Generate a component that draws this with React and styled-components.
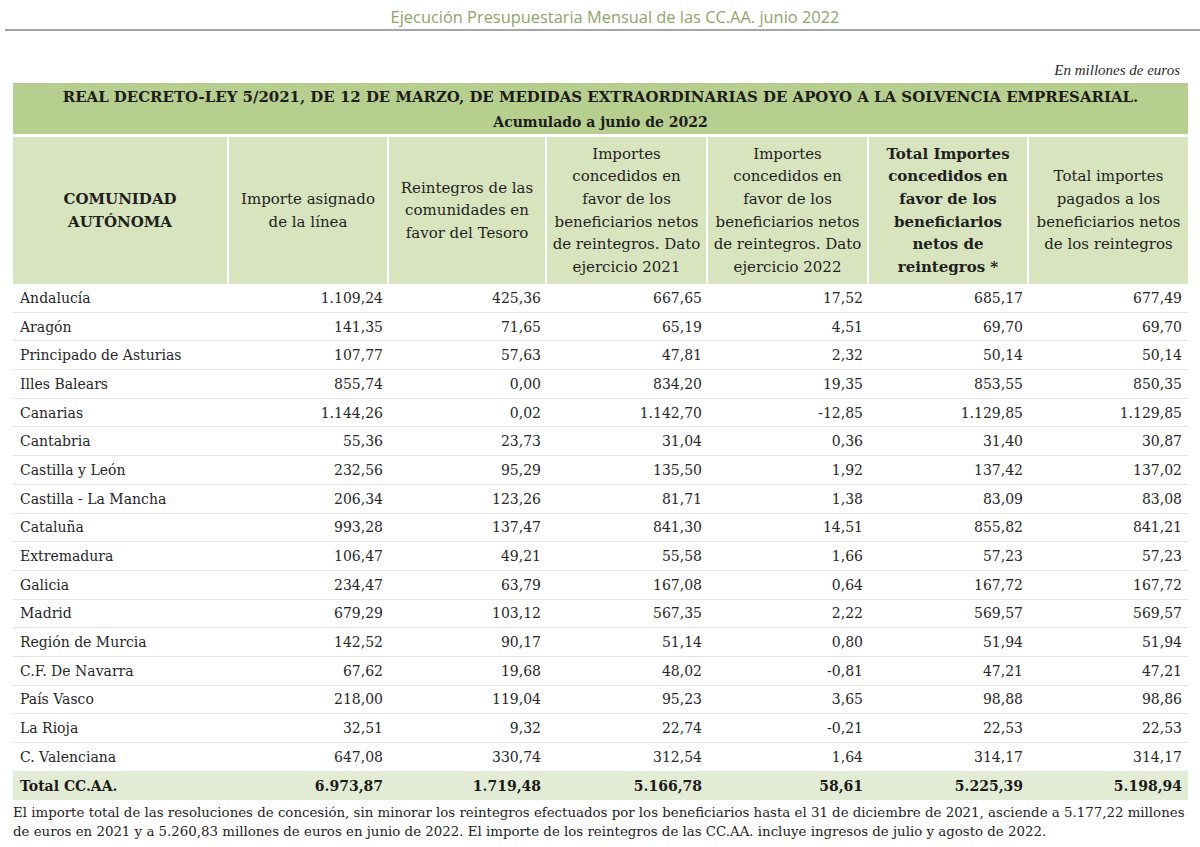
import React from "react";
import styled, { createGlobalStyle } from "styled-components";

const Global = createGlobalStyle`
  html, body { margin: 0; padding: 0; background: #ffffff; }
  body { font-family: "DejaVu Serif", "Liberation Serif", serif; color: #1f1f1f; }
`;

const Page = styled.div`
  width: 1200px;
  height: 847px;
  overflow: hidden;
  background: #fff;
`;

const Title = styled.div`
  margin-left: 5px;
  height: 29px;
  border-bottom: 2px solid #a6a6a6;
  font-family: "Open Sans", "Noto Sans", sans-serif;
  font-size: 16.4px;
  line-height: 33px;
  color: #8fa468;
  text-align: center;
  padding-left: 25px;
`;

const Unit = styled.div`
  margin-top: 29px;
  height: 21px;
  padding-right: 20px;
  text-align: right;
  font-style: italic;
  font-size: 15px;
  line-height: 21px;
  color: #2a2a2a;
  font-family: "Liberation Serif", serif;
`;

const Table = styled.div`
  margin: 2px 0 0 13px;
  width: 1175px;
`;

const Banner = styled.div`
  background: #b7cf8e;
  height: 51px;
  display: flex;
  flex-direction: column;
  justify-content: center;
  align-items: center;
  font-weight: bold;
  color: #1c1c1c;
`;

const BannerLine = styled.div`
  height: 25px;
  line-height: 27px;
  font-size: ${(p) => p.$size || "14px"};
  white-space: nowrap;
`;

const cols = "216px 160px 158px 161px 161px 160px 159px";

const HeaderRow = styled.div`
  display: grid;
  grid-template-columns: ${cols};
  margin-top: 3px;
  height: 147px;
`;

const HeadCell = styled.div`
  background: #d8e4be;
  border-right: 2px solid #fff;
  display: flex;
  align-items: center;
  justify-content: center;
  text-align: center;
  font-size: 15px;
  line-height: 22.6px;
  padding: 0 2px;
  white-space: nowrap;
  font-weight: ${(p) => (p.$bold ? "bold" : "normal")};
  &:last-child { border-right: none; }
`;

const BodyRow = styled.div`
  display: grid;
  grid-template-columns: ${cols};
  height: 28.7px;
  box-sizing: border-box;
  border-bottom: 1px solid #e3e6dc;
  align-items: center;
  font-size: 14px;
  color: #262626;
  background: ${(p) => (p.$total ? "#e2ebd4" : "transparent")};
  font-weight: ${(p) => (p.$total ? "bold" : "normal")};
  ${(p) => p.$total && "border-bottom: none; color: #1a1a1a;"}
`;

const NameCell = styled.div`
  padding-left: 7px;
  white-space: nowrap;
`;

const NumCell = styled.div`
  text-align: right;
  padding-right: 6px;
  white-space: nowrap;
`;

const Note = styled.div`
  margin: 3px 0 0 13px;
  font-size: 13.35px;
  line-height: 19px;
  color: #222;
`;

const NoteLine = styled.div`
  white-space: nowrap;
`;

const headers = [
  { t: ["COMUNIDAD", "AUTÓNOMA"], bold: true },
  { t: ["Importe asignado", "de la línea"] },
  { t: ["Reintegros de las", "comunidades en", "favor del Tesoro"] },
  { t: ["Importes", "concedidos en", "favor de los", "beneficiarios netos", "de reintegros. Dato", "ejercicio 2021"] },
  { t: ["Importes", "concedidos en", "favor de los", "beneficiarios netos", "de reintegros. Dato", "ejercicio 2022"] },
  { t: ["Total Importes", "concedidos en", "favor de los", "beneficiarios", "netos de", "reintegros *"], bold: true },
  { t: ["Total importes", "pagados a los", "beneficiarios netos", "de los reintegros"] },
];

const rows = [
  ["Andalucía", "1.109,24", "425,36", "667,65", "17,52", "685,17", "677,49"],
  ["Aragón", "141,35", "71,65", "65,19", "4,51", "69,70", "69,70"],
  ["Principado de Asturias", "107,77", "57,63", "47,81", "2,32", "50,14", "50,14"],
  ["Illes Balears", "855,74", "0,00", "834,20", "19,35", "853,55", "850,35"],
  ["Canarias", "1.144,26", "0,02", "1.142,70", "-12,85", "1.129,85", "1.129,85"],
  ["Cantabria", "55,36", "23,73", "31,04", "0,36", "31,40", "30,87"],
  ["Castilla y León", "232,56", "95,29", "135,50", "1,92", "137,42", "137,02"],
  ["Castilla - La Mancha", "206,34", "123,26", "81,71", "1,38", "83,09", "83,08"],
  ["Cataluña", "993,28", "137,47", "841,30", "14,51", "855,82", "841,21"],
  ["Extremadura", "106,47", "49,21", "55,58", "1,66", "57,23", "57,23"],
  ["Galicia", "234,47", "63,79", "167,08", "0,64", "167,72", "167,72"],
  ["Madrid", "679,29", "103,12", "567,35", "2,22", "569,57", "569,57"],
  ["Región de Murcia", "142,52", "90,17", "51,14", "0,80", "51,94", "51,94"],
  ["C.F. De Navarra", "67,62", "19,68", "48,02", "-0,81", "47,21", "47,21"],
  ["País Vasco", "218,00", "119,04", "95,23", "3,65", "98,88", "98,86"],
  ["La Rioja", "32,51", "9,32", "22,74", "-0,21", "22,53", "22,53"],
  ["C. Valenciana", "647,08", "330,74", "312,54", "1,64", "314,17", "314,17"],
];

const total = ["Total CC.AA.", "6.973,87", "1.719,48", "5.166,78", "58,61", "5.225,39", "5.198,94"];

function Row({ data, total: isTotal }) {
  return (
    <BodyRow $total={isTotal}>
      <NameCell>{data[0]}</NameCell>
      {data.slice(1).map((v, i) => (
        <NumCell key={i}>{v}</NumCell>
      ))}
    </BodyRow>
  );
}

export default function App() {
  return (
    <Page>
      <Global />
      <Title>Ejecución Presupuestaria Mensual de las CC.AA. junio 2022</Title>
      <Unit>En millones de euros</Unit>
      <Table>
        <Banner>
          <BannerLine $size="14.95px">
            REAL DECRETO-LEY 5/2021, DE 12 DE MARZO, DE MEDIDAS EXTRAORDINARIAS DE APOYO A LA SOLVENCIA EMPRESARIAL.
          </BannerLine>
          <BannerLine $size="14px">Acumulado a junio de 2022</BannerLine>
        </Banner>
        <HeaderRow>
          {headers.map((h, i) => (
            <HeadCell key={i} $bold={h.bold}>
              <div>
                {h.t.map((l, j) => (
                  <div key={j}>{l}</div>
                ))}
              </div>
            </HeadCell>
          ))}
        </HeaderRow>
        {rows.map((r, i) => (
          <Row key={i} data={r} />
        ))}
        <Row data={total} total />
      </Table>
      <Note>
        <NoteLine>
          El importe total de las resoluciones de concesión, sin minorar los reintegros efectuados por los beneficiarios hasta el 31 de diciembre de 2021, asciende a 5.177,22 millones
        </NoteLine>
        <NoteLine>
          de euros en 2021 y a 5.260,83 millones de euros en junio de 2022. El importe de los reintegros de las CC.AA. incluye ingresos de julio y agosto de 2022.
        </NoteLine>
      </Note>
    </Page>
  );
}
